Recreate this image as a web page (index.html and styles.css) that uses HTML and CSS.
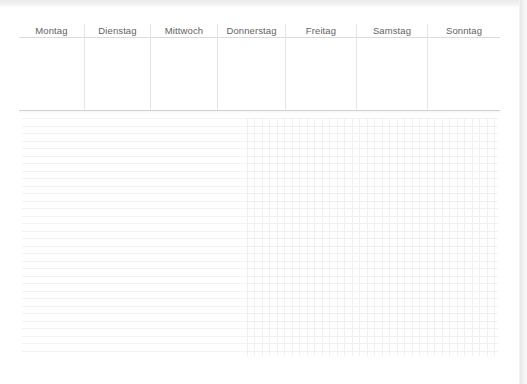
FILE: index.html
```html
<!DOCTYPE html>
<html lang="de">
<head>
<meta charset="utf-8">
<title>Wochenplaner</title>
<link rel="stylesheet" href="styles.css">
</head>
<body>
<div class="page">
  <div class="sheet">
    <div class="topband"></div>
    <div class="planner">
      <div class="week">
        <div class="day"><div class="label">Montag</div></div>
        <div class="day"><div class="label">Dienstag</div></div>
        <div class="day"><div class="label">Mittwoch</div></div>
        <div class="day"><div class="label">Donnerstag</div></div>
        <div class="day"><div class="label">Freitag</div></div>
        <div class="day"><div class="label">Samstag</div></div>
        <div class="day"><div class="label">Sonntag</div></div>
      </div>
      <div class="notes">
        <div class="lined"></div>
        <div class="grid"></div>
      </div>
    </div>
  </div>
  <div class="edge"></div>
</div>
</body>
</html>
```
FILE: styles.css
```css
html, body {
  margin: 0;
  padding: 0;
  background: #ffffff;
}
body {
  width: 527px;
  height: 384px;
  overflow: hidden;
  font-family: "Liberation Sans", Arial, sans-serif;
}
.page {
  display: flex;
  height: 384px;
}
.sheet {
  flex: 1;
  display: flex;
  flex-direction: column;
  background: #ffffff;
}
.topband {
  height: 7px;
  background: linear-gradient(to bottom, #ebebeb 0%, #f2f2f2 60%, #fbfbfb 100%);
}
.planner {
  padding: 17px 0 0 19px;
  width: 481px;
}
.week {
  display: grid;
  grid-template-columns: 66px 66px 67px 68px 71px 71px 72px;
  height: 86px;
  border-bottom: 1px solid #d2d2d2;
  box-shadow: 0 2px 2px -1px rgba(0,0,0,0.05);
  background: linear-gradient(to bottom, transparent 13px, #dadada 13px, #dadada 14px, transparent 14px);
}
.day {
  border-right: 1px solid #e4e4e4;
}
.day:last-child {
  border-right: none;
}
.label {
  height: 13px;
  font-size: 9.5px;
  line-height: 13px;
  text-align: center;
  color: #636363;
  letter-spacing: 0.1px;
}
.notes {
  display: flex;
  margin-top: 7px;
  height: 238px;
}
.lined {
  width: 225px;
  margin-left: 3px;
  background: repeating-linear-gradient(to bottom, #f3f3f3 0, #f3f3f3 1px, transparent 1px, transparent 7.5px);
}
.grid {
  flex: 1;
  margin-right: 2px;
  background:
    repeating-linear-gradient(to right, #f0f0f0 0, #f0f0f0 1px, transparent 1px, transparent 7.5px),
    repeating-linear-gradient(to bottom, #f0f0f0 0, #f0f0f0 1px, transparent 1px, transparent 7.5px);
}
.edge {
  width: 8px;
  background: linear-gradient(to right, #f6f6f6 0, #e6e6e6 2px, #efefef 3px, #f8f8f8 8px);
}
```
